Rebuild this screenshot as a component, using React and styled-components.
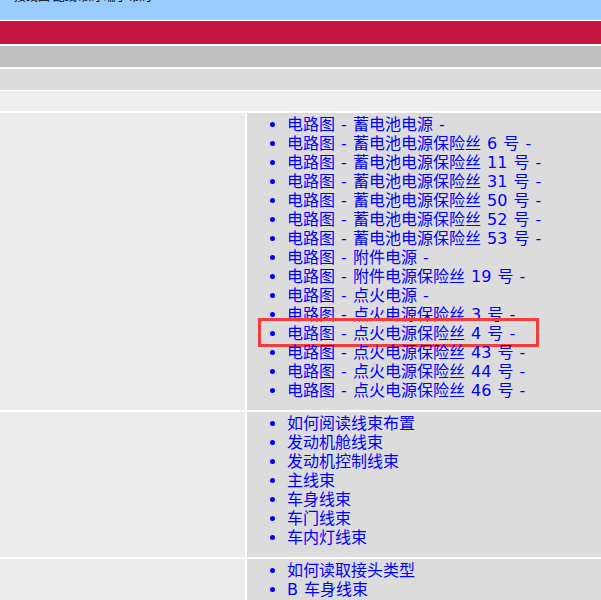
import styled, { createGlobalStyle } from "styled-components";

const GlobalStyle = createGlobalStyle`
  html, body {
    margin: 0;
    padding: 0;
    background: #ffffff;
  }
  body {
    font-family: "DejaVu Sans", "Noto Sans CJK SC", sans-serif;
  }
`;

const sections = [
  [
    "电路图 - 蓄电池电源 -",
    "电路图 - 蓄电池电源保险丝 6 号 -",
    "电路图 - 蓄电池电源保险丝 11 号 -",
    "电路图 - 蓄电池电源保险丝 31 号 -",
    "电路图 - 蓄电池电源保险丝 50 号 -",
    "电路图 - 蓄电池电源保险丝 52 号 -",
    "电路图 - 蓄电池电源保险丝 53 号 -",
    "电路图 - 附件电源 -",
    "电路图 - 附件电源保险丝 19 号 -",
    "电路图 - 点火电源 -",
    "电路图 - 点火电源保险丝 3 号 -",
    "电路图 - 点火电源保险丝 4 号 -",
    "电路图 - 点火电源保险丝 43 号 -",
    "电路图 - 点火电源保险丝 44 号 -",
    "电路图 - 点火电源保险丝 46 号 -",
  ],
  [
    "如何阅读线束布置",
    "发动机舱线束",
    "发动机控制线束",
    "主线束",
    "车身线束",
    "车门线束",
    "车内灯线束",
  ],
  ["如何读取接头类型", "B 车身线束"],
];

const marked = "电路图 - 点火电源保险丝 4 号 -";

const App = () => {
  return (
    <Page>
      <GlobalStyle />
      <TopBar>
        <TopLinks>接线图 配线布局 端子布局</TopLinks>
      </TopBar>
      <Band $bg="#c81442" $h={23} $gap={2} />
      <Band $bg="#bfbfbf" $h={21} $gap={2} />
      <Band $bg="#dcdcdc" $h={21} $gap={1} />
      <Band $bg="#efefef" $h={20} $gap={2} />
      {sections.map((items, i) => (
        <Row key={i}>
          <SideCell />
          <ListCell>
            <LinkList>
              {items.map((t) => (
                <LinkItem key={t}>
                  <Link href="#">{t}</Link>
                  {t === marked && <Highlight />}
                </LinkItem>
              ))}
            </LinkList>
          </ListCell>
        </Row>
      ))}
    </Page>
  );
};
export default App;

const Page = styled.div`
  width: 601px;
  height: 600px;
  overflow: hidden;
  display: flex;
  flex-direction: column;
`;

const TopBar = styled.div`
  height: 20px;
  flex: none;
  background: #99ccff;
  margin-bottom: 1px;
  overflow: hidden;
`;

const TopLinks = styled.div`
  margin-top: -10px;
  padding-left: 14px;
  font-family: "Noto Sans CJK SC", sans-serif;
  font-size: 12px;
  line-height: 12px;
  color: #000000;
  white-space: nowrap;
`;

const Band = styled.div`
  flex: none;
  height: ${(p) => p.$h}px;
  background: ${(p) => p.$bg};
  margin-bottom: ${(p) => p.$gap}px;
`;

const Row = styled.div`
  flex: none;
  display: flex;
  gap: 2px;
  margin-bottom: 2px;
`;

const SideCell = styled.div`
  width: 245px;
  flex: none;
  background: #ececec;
`;

const ListCell = styled.div`
  flex: 1;
  background: #dcdcdc;
  padding: 2px 1px 1px;
`;

const LinkList = styled.ul`
  margin: 0 0 9px;
  padding-left: 39px;
  list-style: disc;
  color: #0000ff;
  font-size: 16px;
  line-height: 19px;
  word-spacing: 1px;
`;

const LinkItem = styled.li`
  position: relative;
  white-space: nowrap;
`;

const Link = styled.a`
  color: #0000ff;
  text-decoration: none;
`;

const Highlight = styled.span`
  position: absolute;
  left: -29px;
  top: -6px;
  width: 281px;
  height: 29px;
  box-sizing: border-box;
  border: 3px solid #f43c3c;
  pointer-events: none;
`;
